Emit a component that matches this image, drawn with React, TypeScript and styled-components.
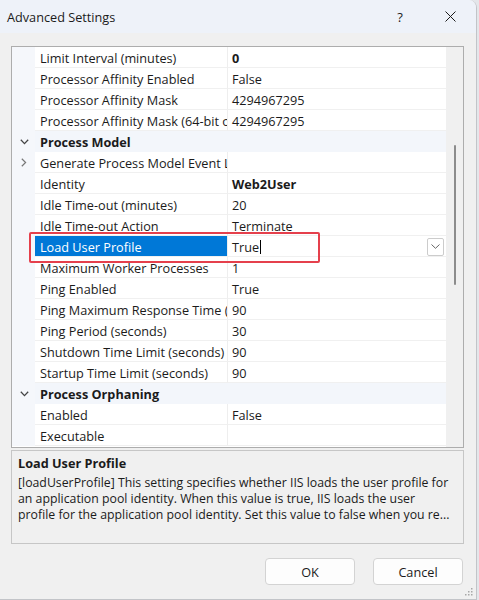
import React from "react";
import styled, { createGlobalStyle } from "styled-components";

const GlobalStyle = createGlobalStyle`
  html, body {
    margin: 0;
    padding: 0;
    background: #e4e6ea;
  }
  body {
    font-family: "Open Sans", "Noto Sans", Arial, sans-serif;
    font-size: 12.7px;
    color: #1b1b1b;
  }
`;

type Prop = {
  name: string;
  value?: string;
  bold?: boolean;
  category?: boolean;
  expandable?: boolean;
  selected?: boolean;
};

const props: Prop[] = [
  { name: "Limit Interval (minutes)", value: "0", bold: true },
  { name: "Processor Affinity Enabled", value: "False" },
  { name: "Processor Affinity Mask", value: "4294967295" },
  { name: "Processor Affinity Mask (64-bit option)", value: "4294967295" },
  { name: "Process Model", category: true },
  { name: "Generate Process Model Event Log Entry", expandable: true },
  { name: "Identity", value: "Web2User", bold: true },
  { name: "Idle Time-out (minutes)", value: "20" },
  { name: "Idle Time-out Action", value: "Terminate" },
  { name: "Load User Profile", value: "True", selected: true },
  { name: "Maximum Worker Processes", value: "1" },
  { name: "Ping Enabled", value: "True" },
  { name: "Ping Maximum Response Time (seconds)", value: "90" },
  { name: "Ping Period (seconds)", value: "30" },
  { name: "Shutdown Time Limit (seconds)", value: "90" },
  { name: "Startup Time Limit (seconds)", value: "90" },
  { name: "Process Orphaning", category: true },
  { name: "Enabled", value: "False" },
  { name: "Executable", value: "" },
];

export default function App() {
  return (
    <>
      <GlobalStyle />
      <Window>
        <TitleBar>
          <Title>Advanced Settings</Title>
          <HelpButton>?</HelpButton>
          <CloseButton>
            <svg width="11" height="11" viewBox="0 0 11 11">
              <path d="M0.5 0.5 L10.5 10.5 M10.5 0.5 L0.5 10.5" stroke="#1b1b1b" strokeWidth="1" />
            </svg>
          </CloseButton>
        </TitleBar>

        <Body>
          <GridFrame>
            <Rows>
              {props.map((p) =>
                p.category ? (
                  <CategoryRow key={p.name}>
                    <Gutter>
                      <svg width="9" height="6" viewBox="0 0 9 6">
                        <path d="M0.8 0.8 L4.5 4.6 L8.2 0.8" fill="none" stroke="#444" strokeWidth="1.3" />
                      </svg>
                    </Gutter>
                    <CategoryName>{p.name}</CategoryName>
                  </CategoryRow>
                ) : (
                  <Row key={p.name}>
                    <Gutter>
                      {p.expandable && (
                        <svg width="6" height="9" viewBox="0 0 6 9">
                          <path d="M0.8 0.8 L4.6 4.5 L0.8 8.2" fill="none" stroke="#777" strokeWidth="1.2" />
                        </svg>
                      )}
                    </Gutter>
                    <NameCell $selected={p.selected}>{p.name}</NameCell>
                    <ValueCell $bold={p.bold}>
                      {p.value}
                      {p.selected && (
                        <>
                          <Caret />
                          <DropButton>
                            <svg width="9" height="5" viewBox="0 0 9 5">
                              <path d="M0.5 0.5 L4.5 4.3 L8.5 0.5" fill="none" stroke="#666" strokeWidth="1" />
                            </svg>
                          </DropButton>
                        </>
                      )}
                    </ValueCell>
                  </Row>
                )
              )}
            </Rows>
            <Scrollbar>
              <Thumb />
            </Scrollbar>
            <Highlight />
          </GridFrame>

          <Description>
            <DescTitle>Load User Profile</DescTitle>
            <DescLine>[loadUserProfile] This setting specifies whether IIS loads the user profile for</DescLine>
            <DescLine>an application pool identity. When this value is true, IIS loads the user</DescLine>
            <DescLine>profile for the application pool identity. Set this value to false when you re...</DescLine>
          </Description>

          <Footer>
            <Button>OK</Button>
            <Button>Cancel</Button>
          </Footer>
        </Body>

        <Grip>
          <svg width="8" height="8" viewBox="0 0 8 8">
            <rect x="6" y="0" width="1.5" height="1.5" fill="#a8a8a8" />
            <rect x="3" y="3" width="1.5" height="1.5" fill="#a8a8a8" />
            <rect x="6" y="3" width="1.5" height="1.5" fill="#a8a8a8" />
            <rect x="0" y="6" width="1.5" height="1.5" fill="#a8a8a8" />
            <rect x="3" y="6" width="1.5" height="1.5" fill="#a8a8a8" />
            <rect x="6" y="6" width="1.5" height="1.5" fill="#a8a8a8" />
          </svg>
        </Grip>
      </Window>
    </>
  );
}

const Window = styled.div`
  position: relative;
  width: 476px;
  height: 599px;
  background: #f0f0f0;
  border-right: 1px solid #c2c4c8;
  border-bottom: 1px solid #c2c4c8;
  border-top-right-radius: 8px;
  overflow: hidden;
  display: flex;
  flex-direction: column;
`;

const TitleBar = styled.div`
  height: 33px;
  flex: none;
  background: #eef2f9;
  display: flex;
  align-items: center;
  padding-left: 7px;
`;

const Title = styled.div`
  flex: 1;
  color: #1b1b1b;
`;

const HelpButton = styled.div`
  width: 40px;
  margin-right: 7px;
  text-align: center;
  font-size: 13px;
  color: #1b1b1b;
`;

const CloseButton = styled.div`
  width: 46px;
  margin-right: 3px;
  display: flex;
  justify-content: center;
  align-items: center;
`;

const Body = styled.div`
  flex: 1;
  padding: 13px 12px 0 11px;
  display: flex;
  flex-direction: column;
`;

const GridFrame = styled.div`
  position: relative;
  height: 402px;
  box-sizing: border-box;
  border: 1px solid #adadad;
  background: #ffffff;
  display: flex;
`;

const Rows = styled.div`
  flex: 1;
  overflow: hidden;
`;

const Row = styled.div`
  display: grid;
  grid-template-columns: 23px 193px 1fr;
  height: 21px;
`;

const CategoryRow = styled.div`
  display: grid;
  grid-template-columns: 23px 1fr;
  height: 21px;
  background: #f3f6fb;
`;

const Gutter = styled.div`
  background: #f5f7fb;
  display: flex;
  align-items: center;
  justify-content: center;
  padding-left: 1px;
`;

const CategoryName = styled.div`
  font-weight: 700;
  line-height: 18px;
  padding-top: 2px;
  padding-left: 5px;
  color: #1b1b1b;
`;

const NameCell = styled.div<{ $selected?: boolean }>`
  box-sizing: border-box;
  line-height: 18px;
  padding-top: 2px;
  height: 21px;
  padding-left: 5px;
  white-space: nowrap;
  overflow: hidden;
  border-right: 1px solid #eeeeee;
  border-bottom: 1px solid #f0f0f0;
  background: ${(p) => (p.$selected ? "#0078d7" : "#ffffff")};
  color: ${(p) => (p.$selected ? "#ffffff" : "#1b1b1b")};
`;

const ValueCell = styled.div<{ $bold?: boolean }>`
  box-sizing: border-box;
  line-height: 18px;
  height: 21px;
  padding-top: 1px;
  padding-left: 4px;
  white-space: nowrap;
  overflow: hidden;
  border-bottom: 1px solid #f0f0f0;
  display: flex;
  align-items: center;
  font-weight: ${(p) => (p.$bold ? 700 : 400)};
`;

const Caret = styled.span`
  display: inline-block;
  width: 1px;
  height: 14px;
  background: #000;
  margin-left: 1px;
`;

const DropButton = styled.div`
  margin-left: auto;
  margin-right: 2px;
  width: 17px;
  height: 18px;
  box-sizing: border-box;
  border: 1px solid #cccccc;
  border-radius: 2px;
  background: #ffffff;
  display: flex;
  align-items: center;
  justify-content: center;
`;

const Scrollbar = styled.div`
  width: 17px;
  flex: none;
  background: #f0f0f0;
  padding-top: 98px;
  box-sizing: border-box;
`;

const Thumb = styled.div`
  width: 2px;
  height: 140px;
  margin-left: 8px;
  border-radius: 1px;
  background: #8c8c8c;
`;

const Highlight = styled.div`
  position: absolute;
  left: 17px;
  top: 185px;
  width: 291px;
  height: 31px;
  box-sizing: border-box;
  border: 2px solid #e5404c;
  border-radius: 2px;
  pointer-events: none;
`;

const Description = styled.div`
  margin-top: 2px;
  height: 94px;
  box-sizing: border-box;
  border: 1px solid #c6c6c6;
  padding: 4px 0 4px 6px;
  font-size: 12.3px;
  line-height: 16px;
  color: #1b1b1b;
`;

const DescTitle = styled.div`
  font-size: 12.7px;
  font-weight: 700;
  margin-bottom: 4px;
`;

const DescLine = styled.div`
  white-space: nowrap;
`;

const Footer = styled.div`
  margin-top: 14px;
  display: flex;
  justify-content: flex-end;
  gap: 18px;
  padding-right: 1px;
`;

const Button = styled.div`
  width: 90px;
  height: 27px;
  box-sizing: border-box;
  border: 1px solid #d3d3d3;
  border-radius: 4px;
  background: #fdfdfd;
  display: flex;
  align-items: center;
  justify-content: center;
  color: #1b1b1b;
`;

const Grip = styled.div`
  position: absolute;
  right: 3px;
  bottom: 3px;
  display: flex;
`;
